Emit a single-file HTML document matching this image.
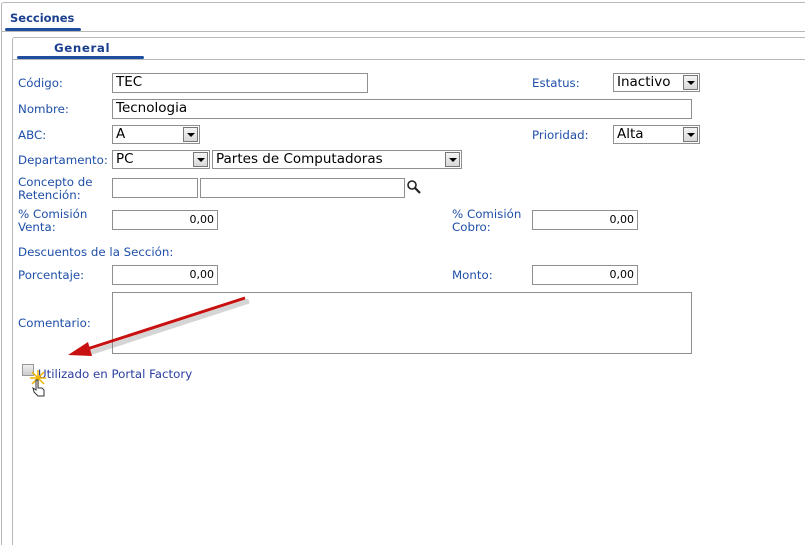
<!DOCTYPE html>
<html><head><style>
html,body{margin:0;width:805px;height:545px;overflow:hidden}
body{background:#fff;position:relative;font-family:"DejaVu Sans",Verdana,sans-serif;font-size:11.8px;color:#1f4fa8}
.a{position:absolute}
.in{position:absolute;border:1px solid #8f8f8f;background:#fff;box-sizing:border-box;color:#000;font-size:13.5px;padding-left:3px;line-height:17px}
.num{text-align:right;padding-right:3px;font-size:11px}
.dd{position:absolute;right:1px;top:1px;width:15px;height:15px;box-sizing:border-box;border:1px solid #777;background:linear-gradient(#f4f4f4,#d8d8d8)}
.dd:after{content:"";position:absolute;left:3px;top:5px;border-left:4px solid transparent;border-right:4px solid transparent;border-top:4px solid #000}
</style></head><body>
<div class="a" style="left:1px;top:2px;width:804px;height:543px;box-sizing:border-box;border:1px solid #b8b8b8;border-right:none;border-bottom:none;border-radius:3px 0 0 0"></div>
<div class="a" style="left:10px;top:11px;font-weight:bold;color:#1b3f8f;font-size:11.5px">Secciones</div>
<div class="a" style="left:5px;top:28px;width:76px;height:3px;background:#1f4ea0;border-radius:2px"></div>
<div class="a" style="left:1px;top:31px;width:804px;height:1px;background:#b8b8b8"></div>
<div class="a" style="left:12px;top:37px;width:793px;height:508px;box-sizing:border-box;border:1px solid #b8b8b8;border-right:none;border-bottom:none;border-radius:3px 0 0 0"></div>
<div class="a" style="left:54px;top:41px;font-weight:bold;color:#1b3f8f;letter-spacing:0.6px">General</div>
<div class="a" style="left:17px;top:56px;width:127px;height:3px;background:#1f4ea0;border-radius:2px"></div>
<div class="a" style="left:13px;top:59px;width:792px;height:1px;background:#b8b8b8"></div>

<div class="a" style="left:18px;top:76px">Código:</div>
<div class="in" style="left:112px;top:73px;width:256px;height:20px">TEC</div>
<div class="a" style="left:532px;top:76px">Estatus:</div>
<div class="in" style="left:613px;top:73px;width:87px;height:19px">Inactivo<div class="dd"></div></div>

<div class="a" style="left:18px;top:102px">Nombre:</div>
<div class="in" style="left:112px;top:99px;width:580px;height:20px">Tecnologia</div>

<div class="a" style="left:18px;top:128px">ABC:</div>
<div class="in" style="left:112px;top:125px;width:88px;height:19px">A<div class="dd"></div></div>
<div class="a" style="left:532px;top:128px">Prioridad:</div>
<div class="in" style="left:613px;top:125px;width:87px;height:19px">Alta<div class="dd"></div></div>

<div class="a" style="left:18px;top:153px">Departamento:</div>
<div class="in" style="left:112px;top:150px;width:98px;height:19px">PC<div class="dd"></div></div>
<div class="in" style="left:212px;top:150px;width:250px;height:19px">Partes de Computadoras<div class="dd"></div></div>

<div class="a" style="left:18px;top:176px;line-height:13px">Concepto de<br>Retención:</div>
<div class="in" style="left:112px;top:178px;width:86px;height:20px"></div>
<div class="in" style="left:200px;top:178px;width:205px;height:20px"></div>
<svg class="a" style="left:406px;top:179px" width="16" height="16"><circle cx="6" cy="6" r="4" fill="none" stroke="#222" stroke-width="1.6"/><line x1="9" y1="9" x2="14" y2="14" stroke="#222" stroke-width="2.2"/></svg>

<div class="a" style="left:18px;top:208px;line-height:13px">% Comisión<br>Venta:</div>
<div class="in num" style="left:112px;top:210px;width:106px;height:20px">0,00</div>
<div class="a" style="left:452px;top:208px;line-height:13px">% Comisión<br>Cobro:</div>
<div class="in num" style="left:532px;top:210px;width:106px;height:20px">0,00</div>

<div class="a" style="left:18px;top:245px">Descuentos de la Sección:</div>
<div class="a" style="left:18px;top:268px">Porcentaje:</div>
<div class="in num" style="left:112px;top:265px;width:106px;height:20px">0,00</div>
<div class="a" style="left:452px;top:268px">Monto:</div>
<div class="in num" style="left:532px;top:265px;width:106px;height:20px">0,00</div>

<div class="a" style="left:18px;top:316px">Comentario:</div>
<div class="in" style="left:112px;top:292px;width:580px;height:62px"></div>

<div class="a" style="left:22px;top:364px;width:12px;height:12px;border:1px solid #999;box-sizing:border-box;background:linear-gradient(#eee,#ccc)"></div>
<div class="a" style="left:38px;top:367px;color:#2a3fa0">Utilizado en Portal Factory</div>
<svg class="a" style="left:0;top:0" width="805" height="545">
<line x1="246" y1="298" x2="86" y2="350" stroke="#888" stroke-opacity=".35" stroke-width="5" transform="translate(3,3)"/>
<line x1="245" y1="298" x2="84" y2="350" stroke="#c81010" stroke-width="3"/>
<polygon points="68,355 88,342 92,356" fill="#c81010"/>
<g stroke="#f0b400" stroke-width="1.5"><line x1="32" y1="372" x2="44" y2="384"/><line x1="44" y1="372" x2="32" y2="384"/><line x1="38" y1="370" x2="38" y2="386"/><line x1="30" y1="378" x2="46" y2="378"/></g>
<path d="M36 380 v10 l-3 -2 l1 4 l4 4 h6 v-6 l-2 -2 h-4 v-8 z" fill="#fff" stroke="#333" stroke-width="1"/>
</svg>
</body></html>
